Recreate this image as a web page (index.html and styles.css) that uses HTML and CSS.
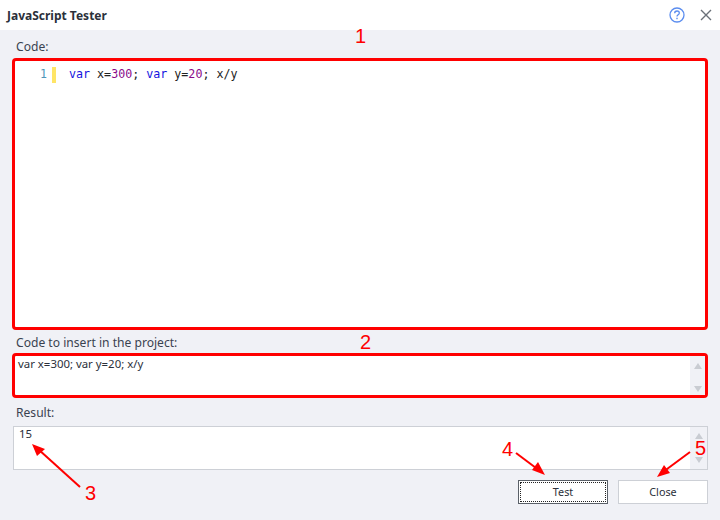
FILE: index.html
```html
<!DOCTYPE html>
<html lang="en">
<head>
<meta charset="utf-8">
<title>JavaScript Tester</title>
<link rel="stylesheet" href="styles.css">
</head>
<body>
<div class="dialog">
  <header class="titlebar">
    <h1 class="title">JavaScript Tester</h1>
    <div class="title-actions">
      <svg class="icon" width="18" height="18" viewBox="0 0 18 18" aria-label="Help">
        <circle cx="9" cy="9" r="7" fill="none" stroke="#5b8def" stroke-width="1.3"/>
        <path d="M6.7 7.2c0-1.4 1-2.2 2.3-2.2s2.3.8 2.3 2c0 1.9-2.3 1.8-2.3 3.6" fill="none" stroke="#5b8def" stroke-width="1.3"/>
        <rect x="8.3" y="11.7" width="1.4" height="1.5" fill="#5b8def"/>
      </svg>
      <svg class="icon" width="14" height="14" viewBox="0 0 14 14" aria-label="Close">
        <path d="M2 2l10 10M12 2L2 12" stroke="#6a7078" stroke-width="1.4" fill="none"/>
      </svg>
    </div>
  </header>
  <main class="content">
    <label class="label label-code">Code:</label>
    <div class="code-box">
      <span class="gutter-num">1</span>
      <span class="change-bar"></span>
      <code class="code"><span class="kw">var</span> x=<span class="num">300</span>; <span class="kw">var</span> y=<span class="num">20</span>; x/y</code>
    </div>
    <label class="label label-insert">Code to insert in the project:</label>
    <div class="text-box insert-box">
      <span class="text-value">var x=300; var y=20; x/y</span>
      <div class="scrollbar scrollbar-insert"><span class="arrow up"></span><span class="arrow down"></span></div>
    </div>
    <label class="label label-result">Result:</label>
    <div class="text-box result-box">
      <span class="text-value">15</span>
      <div class="scrollbar scrollbar-result"><span class="arrow up"></span><span class="arrow down"></span></div>
    </div>
    <div class="buttons">
      <button class="btn btn-default"><span class="focus">Test</span></button>
      <button class="btn btn-plain">Close</button>
    </div>
  </main>
  <svg class="annotations" width="720" height="520" viewBox="0 0 720 520">
    <g stroke="#f00" stroke-width="2" fill="none">
      <path d="M80 487L38 449"/>
      <path d="M516 453L540 471"/>
      <path d="M690 452L663 472"/>
    </g>
    <g fill="#f00">
      <path d="M32 444L45 449L37 456Z"/>
      <path d="M545 475L532 470L538 462Z"/>
      <path d="M657 477L664 465L670 473Z"/>
    </g>
    <g class="note">
      <text x="85" y="500">3</text>
      <text x="355" y="43">1</text>
      <text x="360" y="349">2</text>
      <text x="502" y="456">4</text>
      <text x="695" y="455">5</text>
    </g>
  </svg>
</div>
</body>
</html>
```
FILE: styles.css
```css
* { box-sizing: border-box; }
html, body { margin: 0; padding: 0; }
body { width: 720px; height: 520px; overflow: hidden; background: #f0f1f6; font-family: "Noto Sans", "Liberation Sans", sans-serif; }
.dialog { position: relative; width: 720px; height: 520px; display: flex; flex-direction: column; }
.titlebar { height: 30px; flex: none; background: #fff; display: flex; align-items: center; justify-content: space-between; padding: 0 7px; }
.title { margin: 0; font-size: 12px; font-weight: 700; color: #2b303a; }
.title-actions { display: flex; align-items: center; gap: 13px; }
.icon { display: block; }
.content { flex: 1; display: flex; flex-direction: column; padding: 0 12px; }
.label { display: block; font-size: 12.1px; line-height: 16px; color: #3a4250; padding-left: 4px; }
.label-code { margin-top: 9px; height: 19px; }
.label-insert { margin-top: 5px; height: 18px; }
.label-result { margin-top: 7px; height: 21px; }
.code-box { height: 272px; background: #fff; border: 3px solid #f00; border-radius: 4px; display: flex; align-items: flex-start; padding-top: 6px; }
.gutter-num { width: 32px; text-align: right; font: 11.6px/14px "DejaVu Sans Mono", monospace; color: #4f95b8; }
.change-bar { width: 4px; height: 16px; margin-left: 5px; background: #ffe566; }
.code { margin-left: 13px; font: 11.67px/14px "DejaVu Sans Mono", monospace; color: #222; }
.kw { color: #1414e0; }
.num { color: #8a0a8a; }
.text-box { position: relative; background: #fff; }
.insert-box { height: 45px; border: 3px solid #f00; border-radius: 4px; padding: 1px 3px; }
.result-box { height: 44px; margin-left: 1px; border: 1px solid #cdd0d6; padding: 0 5px; }
.text-value { font-size: 11.4px; line-height: 14px; color: #2b303a; display: block; }
.scrollbar { position: absolute; top: 0; right: 0; bottom: 0; background: #f0f1f6; display: flex; flex-direction: column; justify-content: space-between; align-items: center; }
.scrollbar-insert { width: 15px; padding: 7px 0 3px; }
.scrollbar-result { width: 17px; padding: 6px 0; }
.arrow { width: 0; height: 0; border-left: 4px solid transparent; border-right: 4px solid transparent; }
.arrow.up { border-bottom: 6px solid #c9ccd2; }
.arrow.down { border-top: 6px solid #c9ccd2; }
.buttons { display: flex; justify-content: flex-end; gap: 10px; margin-top: 10px; }
.btn { width: 90px; height: 24px; padding: 0; background: #fff; border: 1px solid #cdd0d6; font: 10.8px "Noto Sans", "Liberation Sans", sans-serif; color: #2b303a; }
.btn-plain { padding-bottom: 2px; }
.btn-default { border-color: #5a6068; padding: 1px; }
.focus { display: flex; align-items: center; justify-content: center; width: 100%; height: 100%; padding-bottom: 2px; border: 1px dotted #222; }
.annotations { position: absolute; left: 0; top: 0; pointer-events: none; }
.note text { font: 20px "Liberation Sans", sans-serif; fill: #f00; }
```
